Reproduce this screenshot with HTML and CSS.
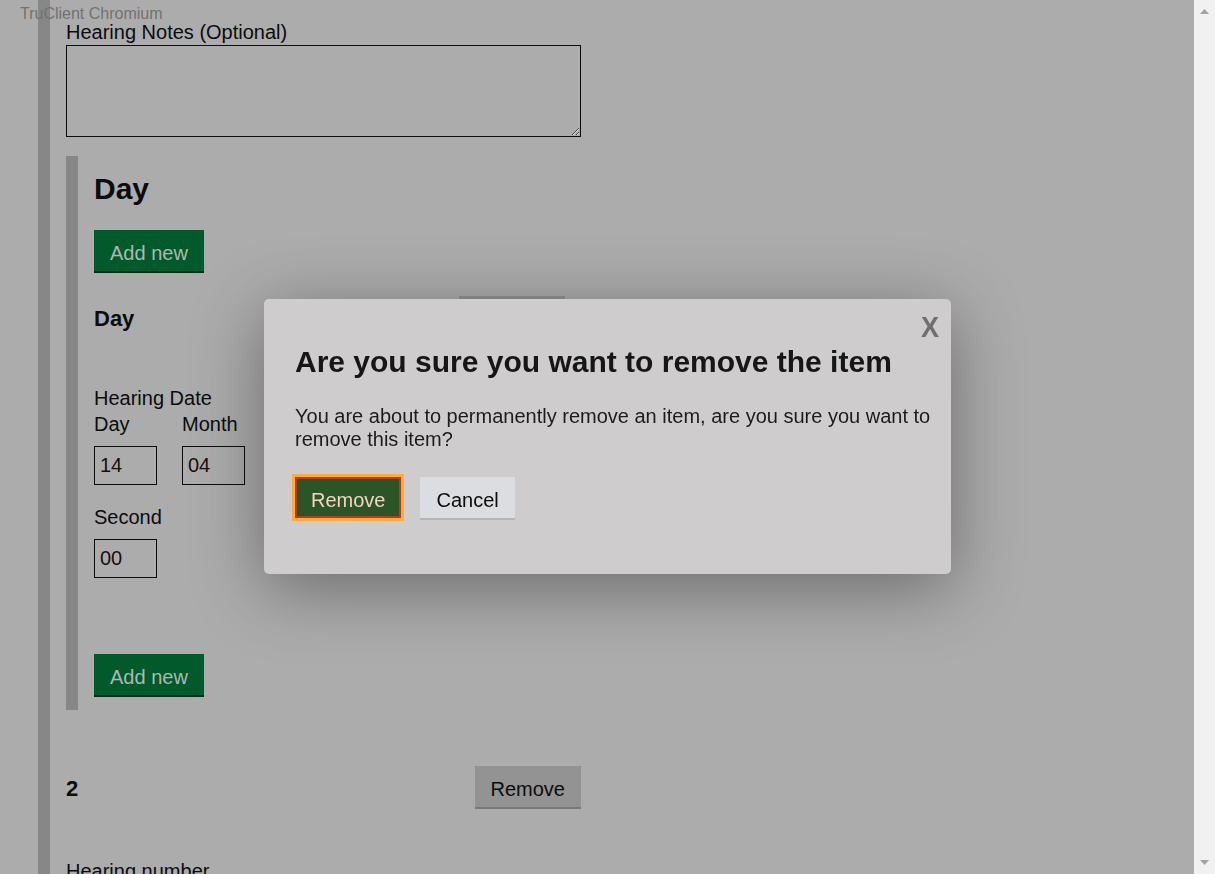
FILE: index.html
```html
<!DOCTYPE html>
<html lang="en">
<head>
<meta charset="utf-8">
<title>Remove item</title>
<link rel="stylesheet" href="styles.css">
</head>
<body>
<div class="window">
  <main class="viewport">
    <div class="page">
      <section class="outer">
        <label class="label notes-label" for="notes">Hearing Notes (Optional)</label>
        <textarea class="textarea" id="notes"></textarea>

        <div class="inset">
          <h2 class="inset-title">Day</h2>
          <button class="btn btn-green" type="button">Add new</button>

          <div class="item-head">
            <h3 class="item-title">Day</h3>
            <button class="btn btn-grey" type="button">Remove</button>
          </div>

          <div class="date">
            <div class="legend">Hearing Date</div>
            <div class="fields">
              <div class="field"><label class="label field-label">Day</label><input class="input" value="14"></div>
              <div class="field"><label class="label field-label">Month</label><input class="input" value="04"></div>
              <div class="field"><label class="label field-label">Second</label><input class="input" value="00"></div>
            </div>
          </div>

          <button class="btn btn-green" type="button">Add new</button>
        </div>

        <div class="item-head item-two">
          <h3 class="item-title">2</h3>
          <button class="btn btn-grey" type="button">Remove</button>
        </div>

        <label class="label number-label">Hearing number</label>
      </section>
    </div>
    <span class="tru-label">TruClient Chromium</span>
  </main>
  <aside class="scrollbar">
    <svg class="arrow" width="9" height="5" viewBox="0 0 9 5"><polygon points="4.5,0 9,5 0,5" fill="#a3a3a3"/></svg>
    <svg class="arrow" width="9" height="5" viewBox="0 0 9 5"><polygon points="0,0 9,0 4.5,5" fill="#a3a3a3"/></svg>
  </aside>
</div>

<div class="modal" role="dialog" aria-modal="true">
  <button class="modal-close" type="button">X</button>
  <h2 class="modal-title">Are you sure you want to remove the item</h2>
  <p class="modal-text">You are about to permanently remove an item, are you sure you want to remove this item?</p>
  <div class="modal-actions">
    <button class="btn btn-danger" type="button">Remove</button>
    <button class="btn btn-light" type="button">Cancel</button>
  </div>
</div>
</body>
</html>
```

FILE: styles.css
```css
html, body {
  margin: 0;
  height: 100%;
  overflow: hidden;
}

body {
  font-family: "Liberation Sans", Arial, sans-serif;
  font-size: 20px;
  line-height: 23px;
  color: #0b0c0c;
}

.window {
  display: flex;
  height: 874px;
}

.viewport {
  flex: 1;
  background: #acacac;
  position: relative;
  overflow: hidden;
}

.page {
  padding-left: 38px;
}

.outer {
  width: 515px;
  min-height: 874px;
  border-left: 12px solid #878787;
  padding: 21px 0 0 16px;
}

.label {
  display: block;
}

.notes-label {
  margin-bottom: 1px;
}

.textarea {
  display: block;
  width: 515px;
  height: 92px;
  box-sizing: border-box;
  margin: 0 0 19px;
  padding: 5px;
  border: 1px solid #0b0c0c;
  border-radius: 0;
  background: transparent;
  font: inherit;
  resize: vertical;
}

.inset {
  border-left: 12px solid #878787;
  padding: 15px 16px 15px 16px;
}

.inset-title {
  margin: 0 0 24px;
  font-size: 30px;
  line-height: 35px;
  font-weight: 700;
}

.btn {
  display: block;
  margin: 0;
  font-family: inherit;
  font-size: 20px;
  line-height: 23px;
  padding: 10px 14px 4px;
  border: 2px solid transparent;
  border-radius: 0;
  cursor: pointer;
}

.btn-green {
  background: #005a2b;
  color: #aeb8b1;
  box-shadow: 0 2px 0 #002b15;
}

.btn-grey {
  background: #939393;
  color: #0b0c0c;
  box-shadow: 0 2px 0 #797979;
}

.item-head {
  display: flex;
  justify-content: space-between;
  align-items: flex-start;
  margin-top: 25px;
}

.item-title {
  margin: 10px 0 0;
  font-size: 22px;
  line-height: 25px;
  font-weight: 700;
}

.date {
  margin-top: 50px;
}

.legend {
  margin-bottom: 3px;
}

.fields {
  display: flex;
  flex-wrap: wrap;
  max-width: 151px;
  column-gap: 25px;
  row-gap: 21px;
  margin-bottom: 76px;
}

.field-label {
  margin-bottom: 10px;
}

.input {
  display: block;
  width: 63px;
  height: 39px;
  box-sizing: border-box;
  margin: 0;
  padding: 0 5px;
  border: 1px solid #0b0c0c;
  border-radius: 0;
  background: transparent;
  font: inherit;
  color: #1a0f0f;
}

.item-two {
  margin-top: 56px;
}

.number-label {
  margin-top: 53px;
}

.tru-label {
  position: absolute;
  left: 20px;
  top: 5px;
  font-size: 16px;
  line-height: 18px;
  color: #727272;
  white-space: nowrap;
}

.scrollbar {
  width: 21px;
  background: #f1f1f1;
  display: flex;
  flex-direction: column;
  justify-content: space-between;
  align-items: center;
  padding: 9px 0;
  box-sizing: border-box;
}

.arrow {
  display: block;
}

.modal {
  position: fixed;
  left: 264px;
  top: 299px;
  width: 687px;
  height: 275px;
  box-sizing: border-box;
  padding: 45px 16px 0 31px;
  background: #cecccc;
  border-radius: 5px;
  box-shadow: 0 14px 70px rgba(0, 0, 0, 0.38);
}

.modal-close {
  position: absolute;
  top: 10px;
  right: 12px;
  padding: 0;
  border: 0;
  background: none;
  font-family: inherit;
  font-size: 30px;
  line-height: 35px;
  font-weight: 700;
  color: #6f6f6f;
  transform: scaleX(0.9);
  transform-origin: right center;
  cursor: pointer;
}

.modal-title {
  margin: 0 0 26px;
  font-size: 30px;
  line-height: 35px;
  font-weight: 700;
  color: #161616;
}

.modal-text {
  margin: 0 0 26px;
  color: #1c1c1c;
}

.modal-actions {
  display: flex;
  align-items: flex-start;
  gap: 19px;
}

.btn-danger {
  background: #2b5427;
  color: #f3d3c4;
  border-color: #b83a1f;
  outline: 3px solid #fdab3b;
}

.btn-light {
  background: #dcdde0;
  color: #0b0c0c;
  box-shadow: 0 2px 0 #b3b5b9;
}
```
